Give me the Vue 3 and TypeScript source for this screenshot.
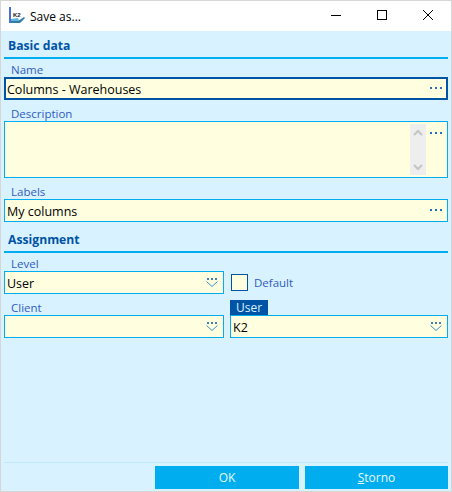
<script setup lang="ts">
// Dialog "Save as..."
const dots = [1, 6, 11];
const pickerDots = [1, 5, 9];
</script>

<template>
  <div class="window">
    <!-- Title bar -->
    <header class="titlebar">
      <svg class="app-icon" width="17" height="17" viewBox="0 0 17 17">
        <rect x="0" y="0" width="2" height="16" fill="#4a6fd8" />
        <text x="4" y="10" class="icon-text">K2</text>
        <path d="M2 12 L9 11 L10 14 L2 16 Z" fill="#5fb4d8" />
        <path d="M2 14 L9 14 L15 10 L16 11 L11 16 L2 16 Z" fill="#2f7fa8" />
      </svg>
      <span class="title">Save as...</span>
      <div class="win-buttons">
        <svg width="46" height="30" viewBox="0 0 46 30"><rect x="18" y="14" width="10" height="1" fill="#000" /></svg>
        <svg width="46" height="30" viewBox="0 0 46 30"><rect x="18.5" y="9.5" width="9" height="9" fill="none" stroke="#000" /></svg>
        <svg width="46" height="30" viewBox="0 0 46 30"><path d="M18 9 L28 19 M28 9 L18 19" stroke="#000" fill="none" /></svg>
      </div>
    </header>

    <main class="content">
      <section class="group">
        <h2 class="heading">Basic data</h2>
        <div class="field">
          <label class="label">Name</label>
          <div class="input input-focus">
            <span class="value">Columns - Warehouses</span>
            <svg class="dots" width="13" height="3" viewBox="0 0 13 3">
              <rect v-for="d in dots" :key="d" :x="d - 1" y="0" width="2" height="2" fill="#1f6fc0" />
            </svg>
          </div>
        </div>
        <div class="field">
          <label class="label">Description</label>
          <div class="input textarea">
            <div class="scrollbar">
              <svg width="10" height="7" viewBox="0 0 10 7"><path d="M1 6 L5 2 L9 6" fill="none" stroke="#c4c4c4" stroke-width="2" /></svg>
              <svg width="10" height="7" viewBox="0 0 10 7"><path d="M1 1 L5 5 L9 1" fill="none" stroke="#c4c4c4" stroke-width="2" /></svg>
            </div>
            <svg class="dots dots-top" width="13" height="3" viewBox="0 0 13 3">
              <rect v-for="d in dots" :key="d" :x="d - 1" y="0" width="2" height="2" fill="#1f6fc0" />
            </svg>
          </div>
        </div>
        <div class="field">
          <label class="label">Labels</label>
          <div class="input">
            <span class="value">My columns</span>
            <svg class="dots" width="13" height="3" viewBox="0 0 13 3">
              <rect v-for="d in dots" :key="d" :x="d - 1" y="0" width="2" height="2" fill="#1f6fc0" />
            </svg>
          </div>
        </div>
      </section>

      <section class="group assignment">
        <h2 class="heading">Assignment</h2>
        <div class="grid">
          <div class="field">
            <label class="label">Level</label>
            <div class="input">
              <span class="value">User</span>
              <svg class="picker" width="12" height="10" viewBox="0 0 12 10">
                <rect v-for="d in pickerDots" :key="d" :x="d" y="0" width="2" height="2" fill="#3f7fc0" />
                <path d="M0.5 3.5 L6 8.5 L11.5 3.5" fill="none" stroke="#3a93cc" />
              </svg>
            </div>
          </div>
          <div class="default-cell">
            <span class="checkbox"></span>
            <span class="check-label">Default</span>
          </div>
          <div class="field">
            <label class="label">Client</label>
            <div class="input">
              <span class="value"></span>
              <svg class="picker" width="12" height="10" viewBox="0 0 12 10">
                <rect v-for="d in pickerDots" :key="d" :x="d" y="0" width="2" height="2" fill="#3f7fc0" />
                <path d="M0.5 3.5 L6 8.5 L11.5 3.5" fill="none" stroke="#3a93cc" />
              </svg>
            </div>
          </div>
          <div class="field">
            <label class="tab">User</label>
            <div class="input">
              <span class="value">K2</span>
              <svg class="picker" width="12" height="10" viewBox="0 0 12 10">
                <rect v-for="d in pickerDots" :key="d" :x="d" y="0" width="2" height="2" fill="#3f7fc0" />
                <path d="M0.5 3.5 L6 8.5 L11.5 3.5" fill="none" stroke="#3a93cc" />
              </svg>
            </div>
          </div>
        </div>
      </section>

      <footer class="footer">
        <button class="btn" type="button">OK</button>
        <button class="btn" type="button"><u>S</u>torno</button>
      </footer>
    </main>
  </div>
</template>

<style>
html, body {
  margin: 0;
  background: #d9f2ff;
}
</style>

<style scoped>
.window {
  width: 452px;
  height: 492px;
  box-sizing: border-box;
  border: 1px solid #d6d6d6;
  display: flex;
  flex-direction: column;
  font-family: "Open Sans", "Noto Sans", sans-serif;
  font-size: 12px;
  overflow: hidden;
}
.titlebar {
  height: 30px;
  background: #fff;
  display: flex;
  align-items: center;
  flex-shrink: 0;
}
.app-icon {
  margin-left: 8px;
  margin-top: -2px;
}
.icon-text {
  font-family: "Liberation Sans", sans-serif;
  font-size: 6px;
  font-weight: 700;
  fill: #222;
}
.title {
  margin-left: 4px;
  font-size: 12px;
  color: #000;
}
.win-buttons {
  margin-left: auto;
  display: flex;
}
.win-buttons svg {
  display: block;
}
.content {
  flex: 1;
  background: #d9f2ff;
  padding: 0 3px 2px;
  display: flex;
  flex-direction: column;
}
.group {
  display: flex;
  flex-direction: column;
}
.heading {
  margin: 0;
  padding: 7px 0 3px 4px;
  font-size: 12.2px;
  line-height: 16px;
  font-weight: 700;
  color: #0054a6;
  border-bottom: 2px solid #00aeef;
}
.label {
  display: block;
  height: 21px;
  padding: 6px 0 0 7px;
  box-sizing: border-box;
  font-size: 11.5px;
  line-height: 15px;
  color: #2f5cc0;
}
/* first field under a heading sits closer */
.field:first-of-type .label {
  height: 18px;
  padding-top: 3px;
}
.input {
  height: 23px;
  box-sizing: border-box;
  border: 1px solid #00aeef;
  background: #ffffe0;
  display: flex;
  align-items: center;
  padding: 0 4px 0 2px;
}
.input-focus {
  border: 2px solid #0054a6;
  padding: 0 3px 0 1px;
}
.value {
  flex: 1;
  color: #000;
  font-size: 12.5px;
  line-height: 16px;
  padding-top: 2px;
}
.dots {
  display: block;
  flex-shrink: 0;
}
.textarea {
  height: 57px;
  align-items: flex-start;
  justify-content: flex-end;
  padding-top: 2px;
}
.scrollbar {
  width: 16px;
  height: 51px;
  background: #eeeeee;
  display: flex;
  flex-direction: column;
  align-items: center;
  justify-content: space-between;
  padding: 5px 0 4px;
  box-sizing: border-box;
  margin-right: 4px;
}
.dots-top {
  margin-top: 8px;
}
.assignment {
  margin-top: 3px;
}
.grid {
  display: grid;
  grid-template-columns: 220px 218px;
  column-gap: 6px;
}
.default-cell {
  display: flex;
  align-items: center;
  padding: 18px 0 0 1px;
  gap: 6px;
}
.checkbox {
  width: 17px;
  height: 17px;
  box-sizing: border-box;
  border: 1px solid #0054a6;
  background: #ffffe0;
}
.check-label {
  color: #2f5cc0;
  font-size: 11.5px;
}
.picker {
  flex-shrink: 0;
  margin-right: 1px;
}
.tab {
  display: block;
  width: 38px;
  height: 15px;
  margin-top: 6px;
  box-sizing: border-box;
  background: #0054a6;
  color: #d9f2ff;
  font-size: 12px;
  line-height: 15px;
  text-align: center;
}
.footer {
  margin-top: auto;
  border-top: 1px solid #bfe8fb;
  display: flex;
  justify-content: flex-end;
  gap: 6px;
  padding-top: 3px;
}
.btn {
  height: 23px;
  border: none;
  padding: 0;
  background: #00aeef;
  color: #e8f8ff;
  font-family: inherit;
  font-size: 12px;
  width: 144px;
}
.btn:last-child {
  width: 143px;
}
</style>
